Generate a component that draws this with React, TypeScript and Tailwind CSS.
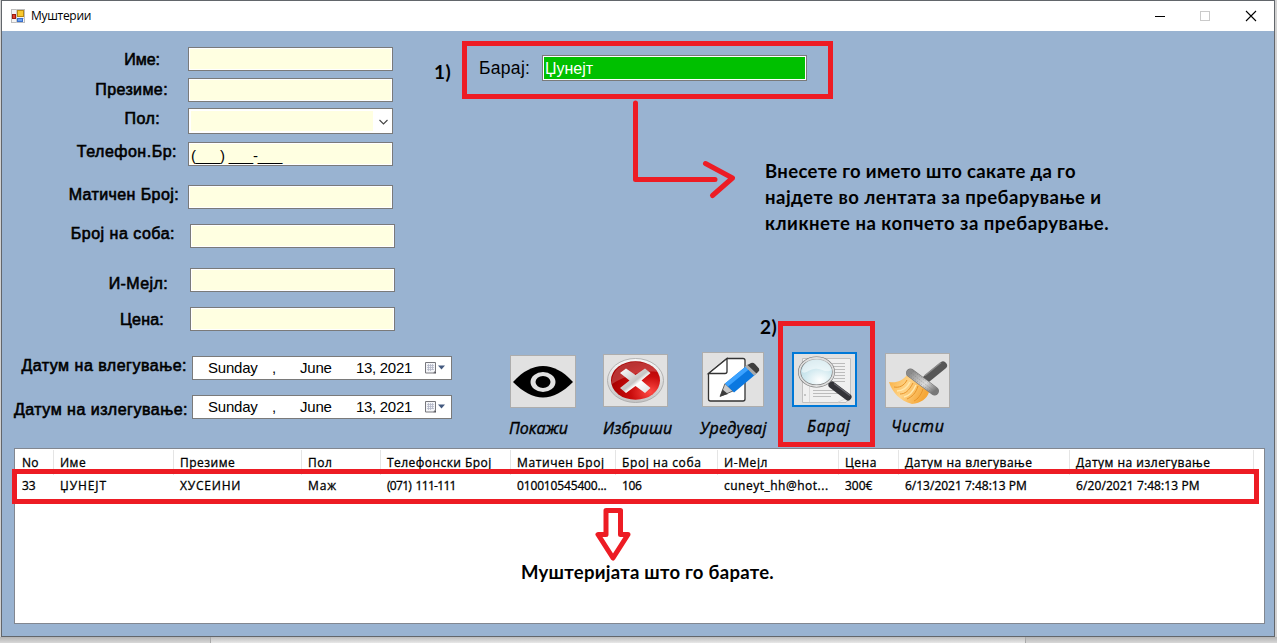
import React from "react";

const fieldRows = [
  { label: "Име:", row: "h-[31px]", pad: "w-[158px] mt-[3px]", field: "ml-[28px]", kind: "text", ls: "tracking-[0px]" },
  { label: "Презиме:", row: "h-[30px]", pad: "w-[166px] mt-[2px]", field: "ml-[20px]", kind: "text", ls: "tracking-[0.4px]" },
  { label: "Пол:", row: "h-[34px]", pad: "w-[158px] mt-[1px]", field: "ml-[28px]", kind: "select", ls: "tracking-[0.4px]" },
  { label: "Телефон.Бр:", row: "h-[43px]", pad: "w-[175px]", field: "ml-[11px]", kind: "phone", ls: "tracking-[0.5px]" },
  { label: "Матичен Број:", row: "h-[39px]", pad: "w-[177px]", field: "ml-[9px]", kind: "text", ls: "tracking-[0.4px]" },
  { label: "Број на соба:", row: "h-[44px]", pad: "w-[173px]", field: "ml-[15px]", kind: "text", ls: "tracking-[0.5px]" },
  { label: "И-Мејл:", row: "h-[39px]", pad: "w-[166px] mt-[6px]", field: "ml-[22px]", kind: "text", ls: "tracking-[0.4px]" },
  { label: "Цена:", row: "h-[49px]", pad: "w-[162px] mt-[3px]", field: "ml-[26px]", kind: "text", ls: "tracking-[0.2px]" },
  { label: "Датум на влегување:", row: "h-[39px]", pad: "w-[185px]", field: "ml-[5px]", kind: "date", ls: "tracking-[0.5px]" },
  { label: "Датум на излегување:", row: "h-[24px]", pad: "w-[186px] mt-[5px]", field: "ml-[4px]", kind: "date", ls: "tracking-[0.5px]" },
];

const columns = [
  { title: "No", value: "33", w: "w-[39px]", pl: "pl-[7px]", ls: "tracking-[0.3px]", vls: "tracking-[-0.2px]" },
  { title: "Име", value: "ЏУНЕЈТ", w: "w-[120px]", pl: "pl-[6px]", ls: "tracking-[0.5px]", vls: "tracking-[0.9px]" },
  { title: "Презиме", value: "ХУСЕИНИ", w: "w-[128px]", pl: "pl-[6px]", ls: "tracking-[0.5px]", vls: "tracking-[0.8px]" },
  { title: "Пол", value: "Маж", w: "w-[79px]", pl: "pl-[6px]", ls: "tracking-[0.5px]", vls: "tracking-[0.9px]" },
  { title: "Телефонски Број", value: "(071) 111-111", w: "w-[130px]", pl: "pl-[6px]", ls: "tracking-[0.45px]", vls: "tracking-[-0.7px] [word-spacing:2px]" },
  { title: "Матичен Број", value: "010010545400...", w: "w-[105px]", pl: "pl-[6px]", ls: "tracking-[0.6px]", vls: "tracking-[-0.15px]" },
  { title: "Број на соба", value: "106", w: "w-[102px]", pl: "pl-[6px]", ls: "tracking-[0.6px]", vls: "tracking-[-0.3px]" },
  { title: "И-Мејл", value: "cuneyt_hh@hot...", w: "w-[121px]", pl: "pl-[6px]", ls: "tracking-[0.6px]", vls: "tracking-[0.5px]" },
  { title: "Цена", value: "300€", w: "w-[60px]", pl: "pl-[6px]", ls: "tracking-[0.5px]", vls: "tracking-[0px]" },
  { title: "Датум на влегување", value: "6/13/2021 7:48:13 PM", w: "w-[171px]", pl: "pl-[6px]", ls: "tracking-[0.5px]", vls: "tracking-[0px]" },
  { title: "Датум на излегување", value: "6/20/2021 7:48:13 PM", w: "w-[184px]", pl: "pl-[6px]", ls: "tracking-[0.5px]", vls: "tracking-[0.1px]" },
];

function AppIcon() {
  return (
    <svg width="14" height="14" viewBox="0 0 14 14">
      <rect x="0.5" y="0.5" width="13" height="13" fill="#f4f4f4" stroke="#bdbdbd" />
      <path d="M5.5 0v14M0 9.5h14" stroke="#c9c9c9" />
      <rect x="6.5" y="1.5" width="6" height="6" fill="#f9c92e" stroke="#b98a12" />
      <rect x="1.5" y="5.5" width="3" height="4" fill="#e0402c" stroke="#9c1b10" />
      <rect x="6.5" y="9.5" width="5" height="3" fill="#6ba2f2" stroke="#3a6fca" />
    </svg>
  );
}

function DatePicker() {
  return (
    <div className="flex h-6 w-[260px] items-center border border-[#7a7a7a] bg-white font-['Liberation_Sans',Arial,sans-serif] text-[15px] leading-6 text-black">
      <span className="ml-[15px] w-[64px] tracking-[-0.2px]">Sunday</span>
      <span className="w-[28px]">,</span>
      <span className="w-[56px] tracking-[-0.2px]">June</span>
      <span className="w-[68px] whitespace-nowrap tracking-[-0.3px]">13, 2021</span>
      <svg width="22" height="14" viewBox="0 0 22 14">
        <path d="M1.5 1.5h10v8.500l-2 2h-8z" fill="#f4f5f8" stroke="#77777c" />
        <path d="M12 10V12.500H9z" fill="#55555c" />
        <path d="M3 4.5h7M3 6.5h7M3 8.5h7M4.5 3v7M6.5 3v7M8.5 3v6" stroke="#b4b8c8" strokeWidth="0.8" />
        <path d="M14 4.5h7l-3.5 4z" fill="#43597f" />
      </svg>
    </div>
  );
}

function Field({ kind }: { kind: string }) {
  if (kind === "date") return <DatePicker />;
  if (kind === "select")
    return (
      <div className="flex h-[26px] w-[205px] border border-[#7a7a7a] bg-white p-[2px]">
        <div className="h-5 w-[182px] bg-[#ffffe1]" />
        <svg className="ml-[6px] mt-[8px]" width="9" height="7" viewBox="0 0 9 7">
          <path d="M0.5 1L4.5 5L8.5 1" fill="none" stroke="#444" strokeWidth="1.1" />
        </svg>
      </div>
    );
  return (
    <div className="h-6 w-[205px] border border-[#7a7a7a] bg-white p-px">
      <div className="h-full whitespace-pre bg-[#ffffe1] pl-px font-['Liberation_Sans',Arial,sans-serif] text-[15px] leading-[23px] tracking-[-0.25px] text-black">
        {kind === "phone" ? "(___) ___-___" : ""}
      </div>
    </div>
  );
}

function EyeIcon() {
  return (
    <svg width="64" height="51" viewBox="0 0 64 51">
      <path d="M2 26C12 15 22 10 32 10S52 15 62 26C52 36 42 41.500 32 41.500S12 36 2 26z" fill="#000" />
      <ellipse cx="32" cy="26" rx="12.500" ry="10" fill="#e1e1e1" />
      <ellipse cx="32" cy="26" rx="7.500" ry="6" fill="#000" />
    </svg>
  );
}

function DeleteIcon() {
  return (
    <svg width="63" height="51" viewBox="0 0 63 51">
      <defs>
        <linearGradient id="rim" x1="0" y1="0" x2="0" y2="1">
          <stop offset="0" stopColor="#f8f8f8" />
          <stop offset="1" stopColor="#c4c4c4" />
        </linearGradient>
        <radialGradient id="red" cx="0.8" cy="0.8" r="0.8">
          <stop offset="0" stopColor="#ff4a44" />
          <stop offset="0.5" stopColor="#c90d0d" />
          <stop offset="1" stopColor="#a80000" />
        </radialGradient>
        <linearGradient id="cross" x1="0" y1="0" x2="1" y2="1">
          <stop offset="0" stopColor="#fff" />
          <stop offset="0.5" stopColor="#c5c5c5" />
          <stop offset="0.6" stopColor="#fff" />
          <stop offset="1" stopColor="#ddd" />
        </linearGradient>
      </defs>
      <ellipse cx="31.500" cy="25.500" rx="28" ry="22" fill="url(#rim)" stroke="#a5a5a5" strokeWidth="0.8" />
      <ellipse cx="31.500" cy="25.500" rx="24.500" ry="19.300" fill="url(#red)" />
      <path d="M8 29C7 17 16 7.500 31 7C42 7 50 11 53 17C42 15 24 19 8 29z" fill="#fff" opacity="0.2" />
      <path d="M22 13.500L31.500 20L41 13.500L46.500 18L37.500 25.500L46.500 33L41 38L31.500 31L22 38L16 33L25.500 25.500L16 18z" fill="url(#cross)" />
    </svg>
  );
}

function EditIcon() {
  return (
    <svg width="60" height="53" viewBox="0 0 60 53">
      <path d="M24 5.500H40Q42 5.500 42 7.500V46Q42 48 40 48H7.500Q5.500 48 5.500 46V20.500z" fill="#fff" stroke="#333" strokeWidth="1.300" />
      <path d="M24 5.500V18.500Q24 20.500 22 20.500H5.500z" fill="#fff" stroke="#333" strokeWidth="1.300" />
      <path d="M17 43.500L22 30.500L30 38z" fill="#c9c9c9" stroke="#444" strokeWidth="0.800" />
      <path d="M17 43.500L19.500 36.500L25 41z" fill="#3c3c3c" />
      <path d="M22 30.500L44 12.500L53 21L31 39.500z" fill="#0b78e0" />
      <path d="M22 30.500L44 12.500L47 15.500L25 33.500z" fill="#3ba2ff" />
      <path d="M42 13.500L45 11.300L54 20L51 22.500z" fill="#aaa" />
      <path d="M44.500 12L48 10Q50 9 52 11L56 15.500Q57 17.500 55 19L53.500 20.500z" fill="#3f3f3f" />
    </svg>
  );
}

function SearchIcon() {
  return (
    <svg width="61" height="51" viewBox="0 0 61 51">
      <defs>
        <radialGradient id="glass" cx="0.6" cy="0.8" r="0.8">
          <stop offset="0" stopColor="#fff" />
          <stop offset="0.6" stopColor="#cde7ee" />
          <stop offset="1" stopColor="#b4d6e0" />
        </radialGradient>
      </defs>
      <path d="M8.500 4.500H56.500V43L52 48.500H8.500z" fill="#f0f0f0" stroke="#c0c0c0" />
      <path d="M15.500 5V48M56 43L44 48" stroke="#dadada" />
      <path d="M38 9.500h13M40 12.500h11M41 15.500h10M41 18.500h10M41 21.500h10M40 24.500h11M38 27.500h13M19 36.500h27M19 39.500h27M19 42.500h18" stroke="#bcbcbc" />
      <path d="M11 40v2" stroke="#999" />
      <path d="M34 27.500L54 43.500" stroke="#777" strokeWidth="4" />
      <path d="M38 31L54 43" stroke="#333338" strokeWidth="7" strokeLinecap="round" />
      <path d="M40 29.500L56 41.500" stroke="#68686e" strokeWidth="1.200" />
      <ellipse cx="22.500" cy="18" rx="17" ry="14" fill="url(#glass)" stroke="#777" strokeWidth="3" />
      <ellipse cx="22.500" cy="18" rx="17" ry="14" fill="none" stroke="#dedede" strokeWidth="1.800" />
      <path d="M8 18C8 9 15 5 23 5S37 10 38 16C30 20 28 13 20 15S12 20 8 18z" fill="#fff" opacity="0.5" />
    </svg>
  );
}

function BrushIcon() {
  return (
    <svg width="62" height="53" viewBox="0 0 62 53">
      <defs>
        <linearGradient id="bristle" x1="0" y1="0" x2="1" y2="0.4">
          <stop offset="0" stopColor="#f8ac3c" />
          <stop offset="0.5" stopColor="#ffd488" />
          <stop offset="1" stopColor="#f5a738" />
        </linearGradient>
        <linearGradient id="metal" x1="0" y1="0" x2="1" y2="1">
          <stop offset="0" stopColor="#8a8a8a" />
          <stop offset="0.3" stopColor="#b4b4b4" />
          <stop offset="0.6" stopColor="#dcdcdc" />
          <stop offset="1" stopColor="#787878" />
        </linearGradient>
      </defs>
      <path d="M40 24.500L56 11.500" stroke="#575757" strokeWidth="8" strokeLinecap="round" />
      <path d="M38 21.500L54 8.500" stroke="#8a8a8a" strokeWidth="1.500" />
      <path d="M20 21C15 27 10 29 2 28C5 38 13 47 25 50C34 49 40 45 42 38z" fill="url(#bristle)" />
      <path d="M20 26C17 32 12 34 7 33M26 29C22 37 18 40 13 40M31 32C29 39 25 43 20 45M36 35C34 41 31 45 27 47" fill="none" stroke="#e8952a" strokeWidth="1" />
      <path d="M23 28C20 34 15 37 10 37M29 31C26 38 22 42 17 43" fill="none" stroke="#ffe9ae" strokeWidth="1.500" />
      <path d="M23.500 19L47.500 37" stroke="#777" strokeWidth="9" strokeLinecap="round" />
      <path d="M23.500 19L47.500 37" stroke="url(#metal)" strokeWidth="7.800" strokeLinecap="round" />
      <path d="M22 21L45 38.500M24 19L47 37M26 17L49 35" stroke="#777" strokeWidth="0.500" strokeDasharray="1 1.500" />
    </svg>
  );
}

const actions = [
  { label: "Покажи", icon: <EyeIcon />, box: "h-[53px] w-[66px] mt-[4px] border border-[#adadad]", wrap: "w-[93px]", text: "mt-[8px] ml-[-1px]", ls: "tracking-[0px]" },
  { label: "Избриши", icon: <DeleteIcon />, box: "h-[53px] w-[65px] mt-[3px] border border-[#adadad]", wrap: "w-[99px]", text: "mt-[9px]", ls: "tracking-[0.1px]" },
  { label: "Уредувај", icon: <EditIcon />, box: "h-[55px] w-[62px] mt-[1px] border border-[#adadad]", wrap: "w-[90px]", text: "mt-[9px] ml-[-2px]", ls: "tracking-[0.3px]" },
  { label: "Барај", icon: <SearchIcon />, box: "h-[55px] w-[65px] mt-[1px] border-2 border-[#0078d7]", wrap: "w-[93px]", text: "mt-[7px] ml-[15px]", ls: "tracking-[0.6px]" },
  { label: "Чисти", icon: <BrushIcon />, box: "h-[55px] w-[65px] mt-[2px] border border-[#adadad]", wrap: "w-[65px]", text: "mt-[6px] ml-[6px]", ls: "tracking-[0.8px]" },
];

export default function App() {
  return (
    <div className="relative flex h-[643px] w-[1277px] flex-col overflow-hidden bg-[#d2d2d2] text-black">
      <div className="ml-px flex h-[637px] w-[1274px] flex-col border border-[#62666b] bg-[#99b3d1]">
        <header className="flex h-[30px] shrink-0 items-center bg-white">
          <div className="ml-[9px]"><AppIcon /></div>
          <span className="ml-[6px] font-['Open_Sans','Noto_Sans',sans-serif] text-[12px] tracking-[-0.3px]">Муштерии</span>
          <svg className="ml-auto mr-[17px]" width="102" height="12" viewBox="0 0 102 12">
            <path d="M0 6.500h10" stroke="#000" />
            <rect x="45.500" y="1.500" width="9" height="9" fill="none" stroke="#cacaca" />
            <path d="M91 1L101 11M101 1L91 11" stroke="#000" strokeWidth="1.100" />
          </svg>
        </header>

        <main className="flex h-[417px] shrink-0">
          <form className="flex w-[458px] flex-col pt-[16px]">
            {fieldRows.map((r) => (
              <div key={r.label} className={`flex shrink-0 items-start ${r.row}`}>
                <label className={`shrink-0 whitespace-nowrap text-right font-['Liberation_Sans',Arial,sans-serif] text-[16px] leading-[20px] [-webkit-text-stroke:0.6px_#000] ${r.pad} ${r.ls}`}>{r.label}</label>
                <div className={r.field}><Field kind={r.kind} /></div>
              </div>
            ))}
          </form>
          <section className="flex flex-1 flex-col pt-[24px]">
            <div className="flex h-[26px] items-center pl-[19px] font-['Liberation_Sans',Arial,sans-serif]">
              <label className="w-[63px] text-[17.500px] leading-[22px] tracking-[0.3px]">Барај:</label>
              <div className="h-[26px] w-[265px] border border-[#7a7a7a] bg-white p-px">
                <div className="h-full bg-[#00c000] pl-px text-[16px] leading-[23px] text-white">Џунејт</div>
              </div>
            </div>
            <div className="mt-auto flex h-[97px] items-start pl-[50px]">
              {actions.map((a) => (
                <div key={a.label} className={`flex shrink-0 flex-col items-start ${a.wrap}`}>
                  <button className={`flex items-center justify-center overflow-hidden bg-[#e1e1e1] ${a.box}`}>{a.icon}</button>
                  <span className={`whitespace-nowrap font-['Open_Sans','Noto_Sans',sans-serif] text-[16px] italic leading-[24px] [-webkit-text-stroke:0.4px_#000] ${a.text} ${a.ls}`}>{a.label}</span>
                </div>
              ))}
            </div>
          </section>
        </main>

        <div className="ml-[12px] flex h-[176px] w-[1251px] shrink-0 border border-[#828790] bg-white font-['Open_Sans','Noto_Sans',sans-serif] text-[12px] [-webkit-text-stroke:0.3px_#000]">
          {columns.map((c) => (
            <div key={c.title} className={`flex shrink-0 flex-col ${c.w}`}>
              <div className={`mt-px flex h-[25px] items-center whitespace-nowrap border-r border-[#e5e5e5] ${c.pl} ${c.ls}`}>{c.title}</div>
              <div className={`mt-px flex h-[20px] items-center whitespace-nowrap ${c.pl} ${c.vls}`}>{c.value}</div>
            </div>
          ))}
        </div>
      </div>
      <div className="flex h-[6px] bg-gradient-to-b from-[#b4b4b4] to-[#d8d8d8]">
        <div className="w-[211px] border-r border-[#a8a8a8]" />
        <div className="w-[815px] border-r border-[#a8a8a8] bg-gradient-to-b from-[#bdbdbd] to-[#e8e8e8]" />
      </div>

      <div className="absolute left-[462px] top-[41px] h-[58px] w-[371px] border-[5px] border-[#ed1c24]" />
      <div className="absolute left-[778px] top-[321px] h-[126px] w-[97px] border-[5px] border-[#ed1c24]" />
      <div className="absolute left-[12px] top-[469px] h-[35px] w-[1247px] border-[5px] border-[#ed1c24]" />
      <svg className="absolute left-[630px] top-[98px]" width="112" height="104" viewBox="0 0 112 104" fill="none" stroke="#ed1c24" strokeWidth="5" strokeLinecap="round">
        <path d="M5.500 5V81.500H85M75.500 65.500L102.500 80L82.500 97.500" strokeLinejoin="round" />
      </svg>
      <svg className="absolute left-[593px] top-[506px]" width="40" height="56" viewBox="0 0 40 56" fill="none" stroke="#ed1c24" strokeWidth="5" strokeLinejoin="round">
        <path d="M13 4.500H27.500V28.500H35L20 52L5 28.500H13z" />
      </svg>
      <div className="absolute left-[434px] top-[60px] font-['Lato','Open_Sans',sans-serif] text-[19px] font-bold leading-6 tracking-[0.6px]">1)</div>
      <div className="absolute left-[760px] top-[315px] font-['Lato','Open_Sans',sans-serif] text-[19px] font-bold leading-6 tracking-[0.6px]">2)</div>
      <div className="absolute left-[765px] top-[158px] whitespace-nowrap font-['Lato','Open_Sans',sans-serif] text-[18.500px] font-bold leading-[26px]">
        <p className="tracking-[0.33px]">Внесете го името што сакате да го</p>
        <p className="tracking-[0.48px]">најдете во лентата за пребарување и</p>
        <p className="tracking-[0.5px]">кликнете на копчето за пребарување.</p>
      </div>
      <div className="absolute left-[521px] top-[559px] whitespace-nowrap font-['Lato','Open_Sans',sans-serif] text-[18.500px] font-bold leading-[26px] tracking-[0.27px]">Муштеријата што го барате.</div>
    </div>
  );
}
